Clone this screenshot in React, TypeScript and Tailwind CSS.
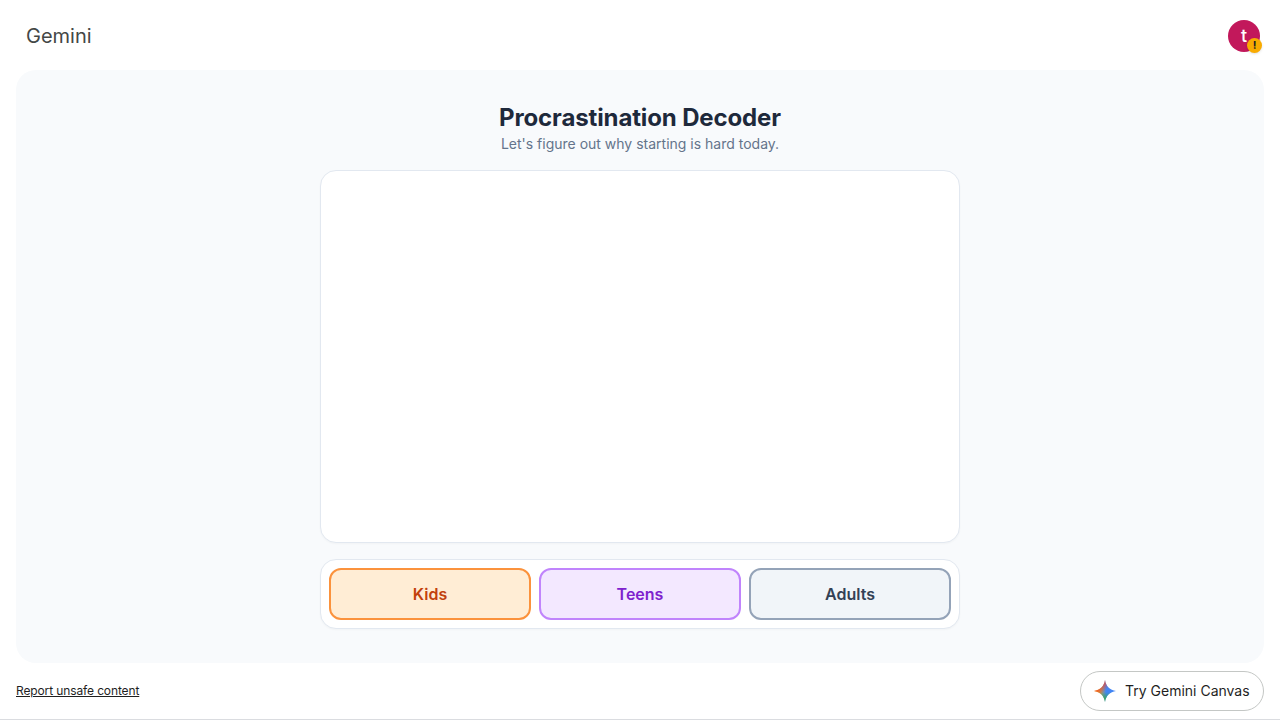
import { useState } from "react";

const levels = [
  { name: "Kids", cls: "border-[#fb923c] bg-[#ffedd5] text-[#c2410c]" },
  { name: "Teens", cls: "border-[#c084fc] bg-[#f3e8ff] text-[#7e22ce]" },
  { name: "Adults", cls: "border-[#94a3b8] bg-[#f1f5f9] text-[#334155]" },
];

const sparkPath = "M12 1C12.7 6.9 17.1 11.3 23 12C17.1 12.7 12.7 17.1 12 23C11.3 17.1 6.9 12.7 1 12C6.9 11.3 11.3 6.9 12 1Z";

function Spark() {
  return (
    <svg width="24" height="24" viewBox="0 0 24 24">
      <defs>
        <linearGradient id="sparkA" x1="0" y1="0" x2="1" y2="0">
          <stop offset="0.15" stopColor="#f9ab00" />
          <stop offset="0.55" stopColor="#4285f4" />
        </linearGradient>
        <linearGradient id="sparkB" x1="0" y1="1" x2="0" y2="0">
          <stop offset="0.1" stopColor="#34a853" />
          <stop offset="0.45" stopColor="#34a853" stopOpacity="0" />
        </linearGradient>
        <linearGradient id="sparkC" x1="0" y1="0" x2="1" y2="1">
          <stop offset="0.25" stopColor="#ea4335" />
          <stop offset="0.5" stopColor="#ea4335" stopOpacity="0" />
        </linearGradient>
      </defs>
      <path d={sparkPath} fill="url(#sparkA)" />
      <path d={sparkPath} fill="url(#sparkB)" />
      <path d={sparkPath} fill="url(#sparkC)" />
    </svg>
  );
}

export default function App() {
  const [level, setLevel] = useState("Kids");

  return (
    <div className="h-[720px] overflow-hidden bg-white flex flex-col font-['Inter',sans-serif] border-b border-[#dadce0]">
      <header className="h-[70px] shrink-0 flex items-center justify-between pl-[26px] pr-5">
        <span className="mt-[2px] text-[20px] text-[#444746]">Gemini</span>
        <div className="relative mt-[2px] w-8 h-8 rounded-full bg-[#c2185b] text-white font-medium flex items-center justify-center text-lg">
          t
          <span className="absolute right-[-2px] bottom-[-1px] w-[15px] h-[15px] rounded-full bg-[#f9ab00] shadow text-[#202124] text-[11px] font-bold leading-[15px] text-center">
            !
          </span>
        </div>
      </header>

      <main className="mx-4 h-[593px] shrink-0 rounded-[20px] bg-[#f8fafc] flex flex-col items-center pt-[32px]">
        <h1 className="text-2xl leading-8 font-bold tracking-[-0.13px] text-[#1e293b]">Procrastination Decoder</h1>
        <p className="text-sm leading-5 text-[#64748b]">Let's figure out why starting is hard today.</p>

        <div className="mt-4 w-[640px] h-[373px] rounded-2xl bg-white border border-[#e2e8f0] shadow-[0_1px_2px_rgba(0,0,0,0.03)]" />

        <div className="mt-4 w-[640px] h-[70px] rounded-2xl bg-white border border-[#e2e8f0] shadow-[0_1px_2px_rgba(0,0,0,0.03)] p-2 grid grid-cols-3 gap-2">
          {levels.map((l) => (
            <button
              key={l.name}
              onClick={() => setLevel(l.name)}
              aria-pressed={level === l.name}
              className={`rounded-xl border-2 font-semibold text-base ${l.cls}`}
            >
              {l.name}
            </button>
          ))}
        </div>
      </main>

      <footer className="flex-1 flex items-center justify-between px-4">
        <a href="#" className="text-xs tracking-[-0.12px] underline text-[#1f1f1f]">Report unsafe content</a>
        <button className="h-10 w-[184px] rounded-full border border-[#c4c7c5] bg-white flex items-center gap-2 pl-3 text-sm text-[#1f1f1f]">
          <Spark />
          Try Gemini Canvas
        </button>
      </footer>
    </div>
  );
}
